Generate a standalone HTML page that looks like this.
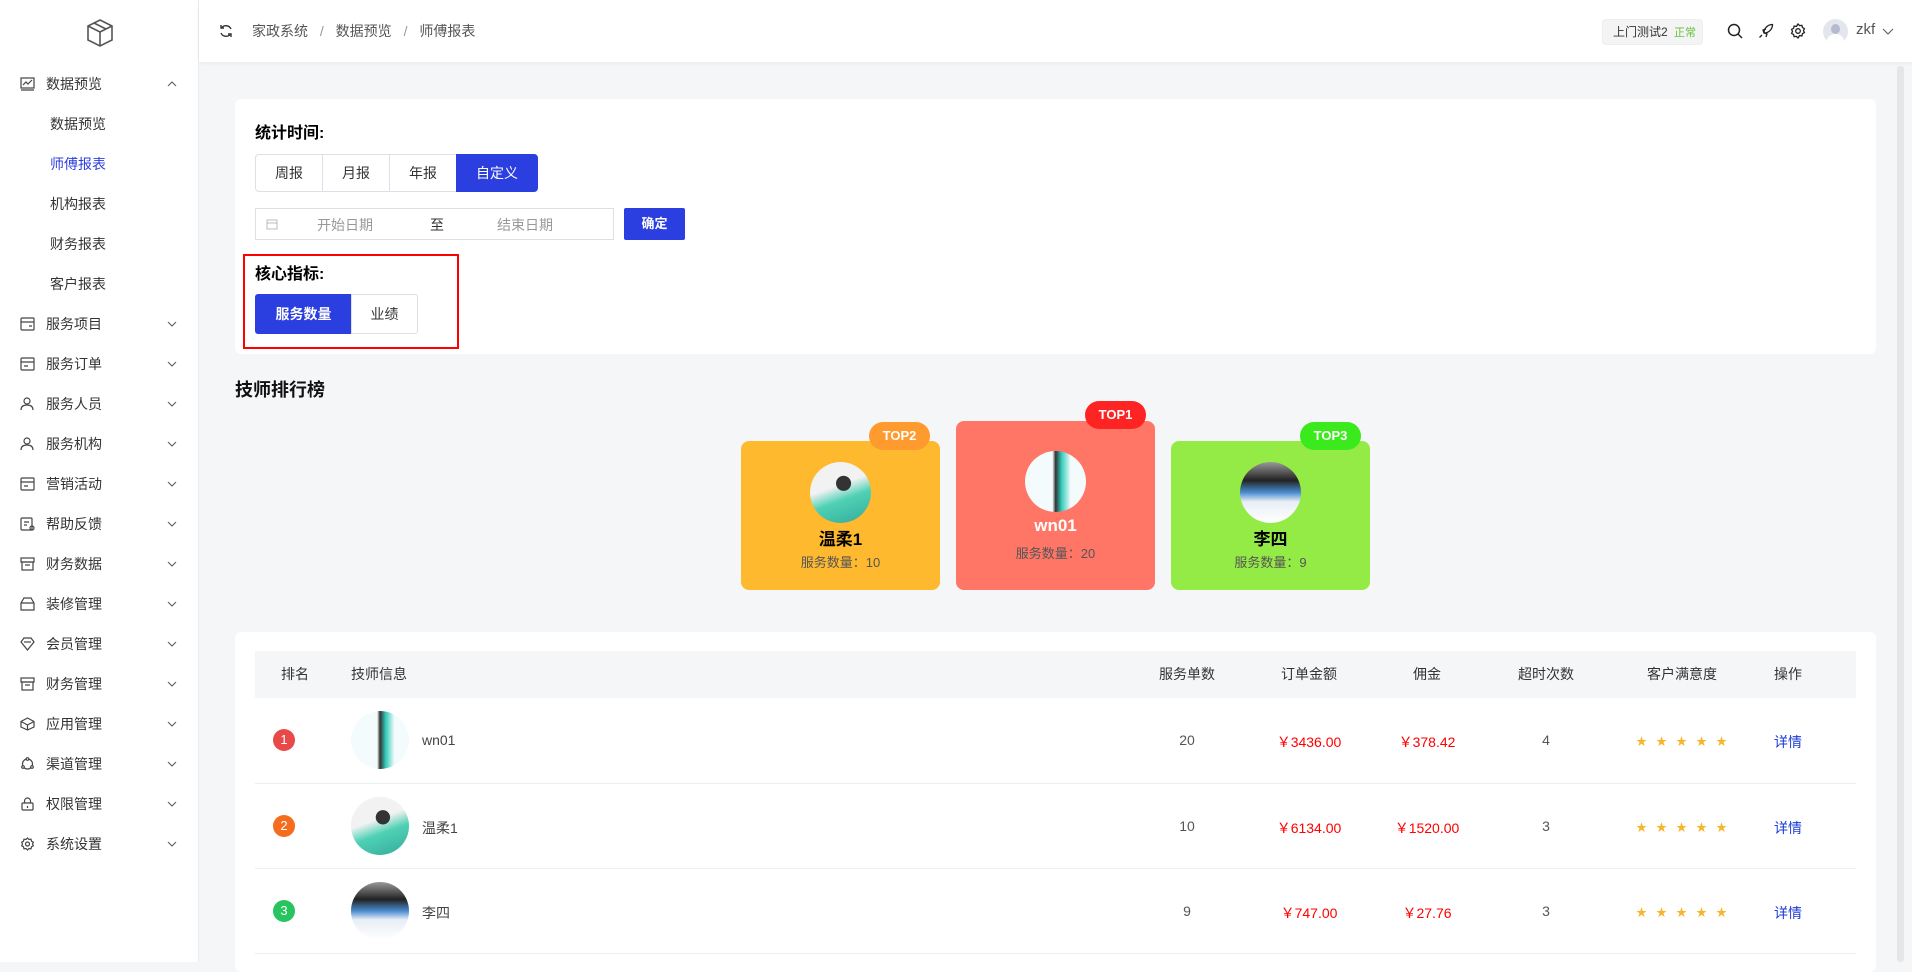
<!DOCTYPE html>
<html><head><meta charset="utf-8"><style>
*{margin:0;padding:0;box-sizing:border-box}
body{width:1912px;height:962px;overflow:hidden;background:#f5f6f8;font-family:"Liberation Sans","Noto Sans CJK SC",sans-serif;color:#333;position:relative}
.a{position:absolute}
#side{left:0;top:0;width:199px;height:962px;background:#fff;border-right:1px solid #eee}
.mi{position:absolute;left:0;width:199px;height:40px;line-height:40px;font-size:14px;color:#333}
.mi .t{position:absolute;left:46px}
.mi.sub .t{left:50px}
.mi svg.ic{position:absolute;left:20px;top:13px}
.mi .cv{position:absolute;left:167px;top:16px}
#hdr{left:199px;top:0;width:1713px;height:62px;background:#fff;box-shadow:0 1px 4px rgba(0,0,0,.06)}
.card{background:#fff;border-radius:6px}
.btn{position:absolute;height:38px;line-height:36px;text-align:center;font-size:14px;border:1px solid #dcdfe6;background:#fff;color:#333}
.blue{background:#2b3ee0;color:#fff;border-color:#2b3ee0}
.badge{position:absolute;width:61px;height:28px;border-radius:14px;color:#fff;font-weight:bold;font-size:13px;line-height:28px;text-align:center}
.av{position:absolute;width:61px;height:61px;border-radius:50%;overflow:hidden}
.nm{position:absolute;width:100%;text-align:center;font-weight:bold;font-size:17px;color:#000}
.cnt{position:absolute;width:100%;text-align:center;font-size:13px;color:#555}
.th{position:absolute;top:651px;height:47px;line-height:47px;font-size:14px;color:#333}
.td{position:absolute;font-size:14px;transform:translateX(-50%);white-space:nowrap}
.circ{position:absolute;width:22px;height:22px;border-radius:50%;color:#fff;font-size:13px;line-height:22px;text-align:center;left:273px}
.tav{position:absolute;left:351px;width:58px;height:58px;border-radius:50%;overflow:hidden}
.sep{position:absolute;left:255px;width:1601px;height:1px;background:#ebeef5}
.star{position:absolute;color:#f7b52c;font-size:11px;letter-spacing:9px;left:1636px}
</style></head><body>
<div id="side" class="a">
<svg class="a" style="left:86px;top:18px" width="28" height="30" viewBox="0 0 28 30" fill="none" stroke="#555" stroke-width="1.6"><path d="M14 2L26 8V22L14 28L2 22V8Z"/><path d="M2 8L14 14L26 8M14 14V28"/><path d="M8 5L20 11"/></svg>
<div class="mi" style="top:64px"><svg class="ic" width="15" height="14" viewBox="0 0 15 14" fill="none" stroke="#444" stroke-width="1.2"><rect x="1" y="1" width="13" height="10"/><path d="M3 8l3-3 2 2 4-4M1 13h13"/></svg><span class="t">数据预览</span><svg class="cv" width="10" height="8" viewBox="0 0 10 8" fill="none" stroke="#666" stroke-width="1.2"><path d="M1 6l4-4 4 4"/></svg></div>
<div class="mi sub" style="top:104px"><span class="t">数据预览</span></div>
<div class="mi sub" style="top:144px;color:#2b3ee0"><span class="t">师傅报表</span></div>
<div class="mi sub" style="top:184px"><span class="t">机构报表</span></div>
<div class="mi sub" style="top:224px"><span class="t">财务报表</span></div>
<div class="mi sub" style="top:264px"><span class="t">客户报表</span></div>
<div class="mi" style="top:304px"><svg class="ic" width="15" height="14" viewBox="0 0 15 14" fill="none" stroke="#444" stroke-width="1.2"><rect x="1" y="1" width="13" height="12" rx="1"/><path d="M1 5h13M9 9h3"/></svg><span class="t">服务项目</span><svg class="cv" width="10" height="8" viewBox="0 0 10 8" fill="none" stroke="#666" stroke-width="1.2"><path d="M1 2l4 4 4-4"/></svg></div>
<div class="mi" style="top:344px"><svg class="ic" width="15" height="14" viewBox="0 0 15 14" fill="none" stroke="#444" stroke-width="1.2"><rect x="1" y="1" width="13" height="12" rx="1"/><path d="M1 5h13M4 9h4"/></svg><span class="t">服务订单</span><svg class="cv" width="10" height="8" viewBox="0 0 10 8" fill="none" stroke="#666" stroke-width="1.2"><path d="M1 2l4 4 4-4"/></svg></div>
<div class="mi" style="top:384px"><svg class="ic" width="15" height="14" viewBox="0 0 15 14" fill="none" stroke="#444" stroke-width="1.2"><circle cx="7" cy="4" r="3"/><path d="M1 13c0-4 3-5 6-5s6 1 6 5"/></svg><span class="t">服务人员</span><svg class="cv" width="10" height="8" viewBox="0 0 10 8" fill="none" stroke="#666" stroke-width="1.2"><path d="M1 2l4 4 4-4"/></svg></div>
<div class="mi" style="top:424px"><svg class="ic" width="15" height="14" viewBox="0 0 15 14" fill="none" stroke="#444" stroke-width="1.2"><circle cx="7" cy="4" r="3"/><path d="M1 13c0-4 3-5 6-5s6 1 6 5"/></svg><span class="t">服务机构</span><svg class="cv" width="10" height="8" viewBox="0 0 10 8" fill="none" stroke="#666" stroke-width="1.2"><path d="M1 2l4 4 4-4"/></svg></div>
<div class="mi" style="top:464px"><svg class="ic" width="15" height="14" viewBox="0 0 15 14" fill="none" stroke="#444" stroke-width="1.2"><rect x="1" y="1" width="13" height="12" rx="1"/><path d="M1 5h13M4 9h4"/></svg><span class="t">营销活动</span><svg class="cv" width="10" height="8" viewBox="0 0 10 8" fill="none" stroke="#666" stroke-width="1.2"><path d="M1 2l4 4 4-4"/></svg></div>
<div class="mi" style="top:504px"><svg class="ic" width="15" height="14" viewBox="0 0 15 14" fill="none" stroke="#444" stroke-width="1.2"><rect x="1" y="1" width="11" height="12" rx="1"/><path d="M4 5h5M4 8h3"/><circle cx="12" cy="11" r="2"/></svg><span class="t">帮助反馈</span><svg class="cv" width="10" height="8" viewBox="0 0 10 8" fill="none" stroke="#666" stroke-width="1.2"><path d="M1 2l4 4 4-4"/></svg></div>
<div class="mi" style="top:544px"><svg class="ic" width="15" height="14" viewBox="0 0 15 14" fill="none" stroke="#444" stroke-width="1.2"><rect x="1" y="1" width="13" height="4"/><rect x="2" y="5" width="11" height="8"/><path d="M5 8h5"/></svg><span class="t">财务数据</span><svg class="cv" width="10" height="8" viewBox="0 0 10 8" fill="none" stroke="#666" stroke-width="1.2"><path d="M1 2l4 4 4-4"/></svg></div>
<div class="mi" style="top:584px"><svg class="ic" width="15" height="14" viewBox="0 0 15 14" fill="none" stroke="#444" stroke-width="1.2"><path d="M1 6l3-5h7l3 5v7H1z M1 6h13"/></svg><span class="t">装修管理</span><svg class="cv" width="10" height="8" viewBox="0 0 10 8" fill="none" stroke="#666" stroke-width="1.2"><path d="M1 2l4 4 4-4"/></svg></div>
<div class="mi" style="top:624px"><svg class="ic" width="15" height="14" viewBox="0 0 15 14" fill="none" stroke="#444" stroke-width="1.2"><path d="M1 5l3-4h7l3 4-6.5 8z"/><path d="M4 5h7"/></svg><span class="t">会员管理</span><svg class="cv" width="10" height="8" viewBox="0 0 10 8" fill="none" stroke="#666" stroke-width="1.2"><path d="M1 2l4 4 4-4"/></svg></div>
<div class="mi" style="top:664px"><svg class="ic" width="15" height="14" viewBox="0 0 15 14" fill="none" stroke="#444" stroke-width="1.2"><rect x="1" y="1" width="13" height="4"/><rect x="2" y="5" width="11" height="8"/><path d="M5 8h5"/></svg><span class="t">财务管理</span><svg class="cv" width="10" height="8" viewBox="0 0 10 8" fill="none" stroke="#666" stroke-width="1.2"><path d="M1 2l4 4 4-4"/></svg></div>
<div class="mi" style="top:704px"><svg class="ic" width="15" height="14" viewBox="0 0 15 14" fill="none" stroke="#444" stroke-width="1.2"><path d="M7.5 1L14 4.5V10L7.5 13L1 10V4.5Z M1 4.5l6.5 3.5 6.5-3.5M7.5 8v5"/></svg><span class="t">应用管理</span><svg class="cv" width="10" height="8" viewBox="0 0 10 8" fill="none" stroke="#666" stroke-width="1.2"><path d="M1 2l4 4 4-4"/></svg></div>
<div class="mi" style="top:744px"><svg class="ic" width="15" height="14" viewBox="0 0 15 14" fill="none" stroke="#444" stroke-width="1.2"><circle cx="7.5" cy="7" r="5"/><circle cx="7.5" cy="2" r="1.3" fill="#fff"/><circle cx="3" cy="10" r="1.3" fill="#fff"/><circle cx="12" cy="10" r="1.3" fill="#fff"/></svg><span class="t">渠道管理</span><svg class="cv" width="10" height="8" viewBox="0 0 10 8" fill="none" stroke="#666" stroke-width="1.2"><path d="M1 2l4 4 4-4"/></svg></div>
<div class="mi" style="top:784px"><svg class="ic" width="15" height="14" viewBox="0 0 15 14" fill="none" stroke="#444" stroke-width="1.2"><rect x="2" y="6" width="11" height="7" rx="1"/><path d="M4.5 6V4a3 3 0 016 0v2M7.5 9v2"/></svg><span class="t">权限管理</span><svg class="cv" width="10" height="8" viewBox="0 0 10 8" fill="none" stroke="#666" stroke-width="1.2"><path d="M1 2l4 4 4-4"/></svg></div>
<div class="mi" style="top:824px"><svg class="ic" width="15" height="14" viewBox="0 0 15 14" fill="none" stroke="#444" stroke-width="1.2"><circle cx="7.5" cy="7" r="2"/><path d="M7.5 1l1.5 1.5 2-.3.5 2 1.8 1-.8 1.8.8 1.8-1.8 1-.5 2-2-.3L7.5 13 6 11.5l-2 .3-.5-2-1.8-1 .8-1.8-.8-1.8 1.8-1 .5-2 2 .3z"/></svg><span class="t">系统设置</span><svg class="cv" width="10" height="8" viewBox="0 0 10 8" fill="none" stroke="#666" stroke-width="1.2"><path d="M1 2l4 4 4-4"/></svg></div>
</div>

<div id="hdr" class="a">
<svg class="a" style="left:20px;top:24px" width="14" height="14" viewBox="0 0 14 14" fill="none" stroke="#333" stroke-width="1.4"><path d="M12 5A5.5 5.5 0 002.5 4M2 9a5.5 5.5 0 009.5 1"/><path d="M2 1v3h3M12 13v-3H9"/></svg>
<div class="a" style="left:53px;top:21px;font-size:14px;color:#555">家政系统 <span style="color:#999;margin:0 8px">/</span> 数据预览 <span style="color:#999;margin:0 8px">/</span> 师傅报表</div>
<div class="a" style="left:1403px;top:19px;width:101px;height:26px;background:#f4f4f5;border:1px solid #eee;border-radius:4px;font-size:12px;line-height:24px;padding-left:10px;color:#333">上门测试2 <span style="color:#67c23a;font-size:11px;margin-left:3px">正常</span></div>
<svg class="a" style="left:1528px;top:23px" width="16" height="16" viewBox="0 0 16 16" fill="none" stroke="#222" stroke-width="1.5"><circle cx="7" cy="7" r="5.5"/><path d="M11 11l4 4"/></svg>
<svg class="a" style="left:1559px;top:23px" width="16" height="16" viewBox="0 0 16 16" fill="none" stroke="#222" stroke-width="1.3"><path d="M6 10C6 5 10 1.5 14.5 1.5 14.5 6 11 10 6 10z M6 10l-1-3 3-1M6 10l3 1-1 3M4 12l-2.5 2.5"/></svg>
<svg class="a" style="left:1591px;top:23px" width="16" height="16" viewBox="0 0 16 16" fill="none" stroke="#222" stroke-width="1.3"><circle cx="8" cy="8" r="2.3"/><path d="M8 1l1.6 1.6 2.3-.3.5 2.2 2 1.1-.9 2 .9 2-2 1.1-.5 2.2-2.3-.3L8 15l-1.6-1.6-2.3.3-.5-2.2-2-1.1.9-2-.9-2 2-1.1.5-2.2 2.3.3z"/></svg>
<div class="a" style="left:1624px;top:19px;width:25px;height:25px;border-radius:50%;background:#e4e6ee;overflow:hidden"><div class="a" style="left:8px;top:5px;width:9px;height:10px;border-radius:50%;background:#b5bbcc"></div><div class="a" style="left:4px;top:15px;width:17px;height:14px;border-radius:50%;background:#fff"></div></div>
<div class="a" style="left:1657px;top:21px;font-size:15px;color:#555">zkf</div>
<svg class="a" style="left:1683px;top:28px" width="12" height="8" viewBox="0 0 12 8" fill="none" stroke="#666" stroke-width="1.2"><path d="M1 1l5 5 5-5"/></svg>
</div>

<div class="a" style="left:215px;top:79px;width:1680px;height:883px;background:#f5f6f8"></div>
<div class="a" style="left:1897px;top:66px;width:7px;height:896px;background:#e6e6e6;border-radius:3px"></div>

<div class="a card" style="left:235px;top:99px;width:1641px;height:255px"></div>
<div class="a" style="left:255px;top:119px;font-size:16px;font-weight:bold;color:#000">统计时间:</div>
<div class="btn" style="left:255px;top:154px;width:68px;border-radius:4px 0 0 4px">周报</div>
<div class="btn" style="left:322px;top:154px;width:68px">月报</div>
<div class="btn" style="left:389px;top:154px;width:68px">年报</div>
<div class="btn blue" style="left:456px;top:154px;width:82px;border-radius:0 4px 4px 0">自定义</div>
<div class="a" style="left:255px;top:208px;width:359px;height:32px;border:1px solid #dcdfe6;background:#fff"></div>
<svg class="a" style="left:266px;top:218px" width="12" height="12" viewBox="0 0 12 12" fill="none" stroke="#bbb"><rect x="1" y="2" width="10" height="9"/><path d="M1 5h10"/></svg>
<div class="a" style="left:317px;top:215px;font-size:14px;color:#999">开始日期</div>
<div class="a" style="left:430px;top:215px;font-size:14px;color:#333">至</div>
<div class="a" style="left:497px;top:215px;font-size:14px;color:#999">结束日期</div>
<div class="btn blue" style="left:624px;top:208px;width:61px;height:32px;line-height:30px;border-radius:2px;font-weight:bold;font-size:13px">确定</div>
<div class="a" style="left:243px;top:254px;width:216px;height:95px;border:2px solid #f00"></div>
<div class="a" style="left:255px;top:260px;font-size:16px;font-weight:bold;color:#000">核心指标:</div>
<div class="btn blue" style="left:255px;top:294px;width:97px;height:40px;line-height:38px;border-radius:3px 0 0 3px;font-weight:bold">服务数量</div>
<div class="btn" style="left:351px;top:294px;width:67px;height:40px;line-height:38px;border-radius:0 3px 3px 0">业绩</div>

<div class="a" style="left:235px;top:376px;font-size:18px;font-weight:bold;color:#111">技师排行榜</div>

<div class="a" style="left:741px;top:441px;width:199px;height:149px;background:#ffb92e;border-radius:8px">
<div class="av" style="left:69px;top:21px;background:radial-gradient(circle at 55% 35%,#333 0 14%,transparent 15%),linear-gradient(160deg,#f2f2f2 40%,#4fd1b5 60%,#3a9)"></div>
<div class="nm" style="top:84px">温柔1</div><div class="cnt" style="top:111px">服务数量：10</div></div>
<div class="badge" style="left:869px;top:422px;background:#ff9a2e">TOP2</div>

<div class="a" style="left:956px;top:421px;width:199px;height:169px;background:#ff7566;border-radius:8px">
<div class="av" style="left:69px;top:30px;background:linear-gradient(90deg,#f4fbfc 45%,#333 50%,#3cb 60%,#f4fbfc 75%)"></div>
<div class="nm" style="top:95px;color:#fff">wn01</div><div class="cnt" style="top:122px">服务数量：20</div></div>
<div class="badge" style="left:1085px;top:401px;background:#ff2424">TOP1</div>

<div class="a" style="left:1171px;top:441px;width:199px;height:149px;background:#95eb45;border-radius:8px">
<div class="av" style="left:69px;top:21px;background:linear-gradient(180deg,#999 0,#222 30%,#4a8cd0 50%,#e8eef5 65%,#fff)"></div>
<div class="nm" style="top:84px">李四</div><div class="cnt" style="top:111px">服务数量：9</div></div>
<div class="badge" style="left:1300px;top:422px;background:#3bea1c">TOP3</div>

<div class="a card" style="left:235px;top:632px;width:1641px;height:340px"></div>
<div class="a" style="left:255px;top:651px;width:1601px;height:47px;background:#f5f6f8"></div>
<div class="th" style="left:281px">排名</div>
<div class="th" style="left:351px">技师信息</div>
<div class="th" style="left:1159px">服务单数</div>
<div class="th" style="left:1281px">订单金额</div>
<div class="th" style="left:1413px">佣金</div>
<div class="th" style="left:1518px">超时次数</div>
<div class="th" style="left:1647px">客户满意度</div>
<div class="th" style="left:1774px">操作</div>

<div class="circ" style="top:729px;background:#e84a4a">1</div>
<div class="tav" style="top:711px;background:linear-gradient(90deg,#f4fbfc 45%,#333 50%,#3cb 60%,#f4fbfc 75%)"></div>
<div class="a" style="left:422px;top:732px;font-size:14px;color:#444">wn01</div>
<div class="td" style="left:1187px;top:732px;color:#555">20</div>
<div class="td" style="left:1309px;top:732px;color:#f00">￥3436.00</div>
<div class="td" style="left:1427px;top:732px;color:#f00">￥378.42</div>
<div class="td" style="left:1546px;top:732px;color:#555">4</div>
<div class="star" style="top:733px">★★★★★</div>
<div class="td" style="left:1788px;top:732px;color:#1a3ad6">详情</div>
<div class="sep" style="top:783px"></div>

<div class="circ" style="top:815px;background:#f56c1d">2</div>
<div class="tav" style="top:797px;background:radial-gradient(circle at 55% 35%,#333 0 14%,transparent 15%),linear-gradient(160deg,#f2f2f2 40%,#4fd1b5 60%,#3a9)"></div>
<div class="a" style="left:422px;top:818px;font-size:14px;color:#444">温柔1</div>
<div class="td" style="left:1187px;top:818px;color:#555">10</div>
<div class="td" style="left:1309px;top:818px;color:#f00">￥6134.00</div>
<div class="td" style="left:1427px;top:818px;color:#f00">￥1520.00</div>
<div class="td" style="left:1546px;top:818px;color:#555">3</div>
<div class="star" style="top:819px">★★★★★</div>
<div class="td" style="left:1788px;top:818px;color:#1a3ad6">详情</div>
<div class="sep" style="top:868px"></div>

<div class="circ" style="top:900px;background:#27c45f">3</div>
<div class="tav" style="top:882px;background:linear-gradient(180deg,#999 0,#222 30%,#4a8cd0 50%,#e8eef5 65%,#fff)"></div>
<div class="a" style="left:422px;top:903px;font-size:14px;color:#444">李四</div>
<div class="td" style="left:1187px;top:903px;color:#555">9</div>
<div class="td" style="left:1309px;top:903px;color:#f00">￥747.00</div>
<div class="td" style="left:1427px;top:903px;color:#f00">￥27.76</div>
<div class="td" style="left:1546px;top:903px;color:#555">3</div>
<div class="star" style="top:904px">★★★★★</div>
<div class="td" style="left:1788px;top:903px;color:#1a3ad6">详情</div>
<div class="sep" style="top:953px"></div>
</body></html>
